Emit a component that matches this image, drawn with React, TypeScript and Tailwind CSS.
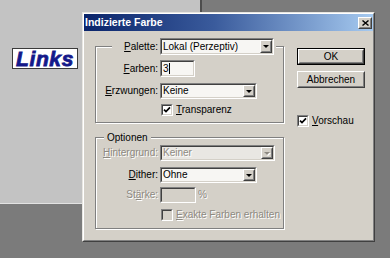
import React from "react";

type Kids = { children?: React.ReactNode; className?: string };

const dim = "text-[#8d8981] [text-shadow:1px_1px_0_#fff]";

// sunken 2px edge used by edits, combos and check boxes
const Sunken = ({ children, className = "", fill = "bg-[#f7f6f3]" }: Kids & { fill?: string }) => (
  <div className={`border border-t-[#808080] border-l-[#808080] border-r-white border-b-white ${className}`}>
    <div className={`flex h-full w-full items-center border border-t-[#404040] border-l-[#404040] border-r-[#d4d0c8] border-b-[#d4d0c8] ${fill}`}>
      {children}
    </div>
  </div>
);

const Raised = ({ children, className = "" }: Kids) => (
  <div className={`border border-t-white border-l-white border-r-[#404040] border-b-[#404040] bg-[#d4d0c8] ${className}`}>
    <div className="flex h-full w-full items-center justify-center border border-t-[#d4d0c8] border-l-[#d4d0c8] border-r-[#808080] border-b-[#808080]">
      {children}
    </div>
  </div>
);

const Arrow = ({ off }: { off?: boolean }) => (
  <Raised className="h-full w-[12px] shrink-0">
    <span
      className={`h-0 w-0 border-x-[3px] border-t-[3px] border-x-transparent ${
        off ? "border-t-[#8d8981] [filter:drop-shadow(1px_1px_0_#fff)]" : "border-t-black"
      }`}
    />
  </Raised>
);

const Combo = ({ value, className, off }: { value: string; className: string; off?: boolean }) => (
  <Sunken className={className} fill={off ? "bg-[#e9e7e3]" : "bg-[#f7f6f3]"}>
    <span className={`flex-1 truncate pl-[1px] leading-none ${off ? dim : "text-black"}`}>{value}</span>
    <Arrow off={off} />
  </Sunken>
);

const Check = ({ on, off }: { on?: boolean; off?: boolean }) => (
  <Sunken className="h-[12px] w-[12px] shrink-0" fill={off ? "bg-[#d4d0c8]" : "bg-white"}>
    {on && (
      <svg width="8" height="8" viewBox="0 0 8 8" className="block">
        <polyline points="1,3.6 3,5.6 7,1.4" fill="none" stroke="#000" strokeWidth="1.7" />
      </svg>
    )}
  </Sunken>
);

const Row = ({ label, children, className = "", off }: Kids & { label: React.ReactNode; off?: boolean }) => (
  <div className={`flex items-center ${className}`}>
    <span className={`w-[62px] text-right leading-none ${off ? dim : ""}`}>{label}</span>
    <div className="ml-[2px] flex items-center">{children}</div>
  </div>
);

const groupBox =
  "border border-[#808080] shadow-[inset_1px_1px_0_#fff,1px_1px_0_#fff] flex flex-col";

export default function App() {
  return (
    <div className="relative h-[258px] w-[390px] overflow-hidden bg-[#7b7b7b] font-['Liberation_Sans',Arial,sans-serif] text-[10px] text-black">
      {/* document canvas behind the dialog */}
      <div className="h-[204px] w-[202px] border-r-2 border-b border-r-[#4d4d4d] border-b-[#e2e2e2] bg-[#c3c3c3] pt-[48px] pl-[12px]">
        <div className="flex h-[21px] w-[66px] items-center justify-center border border-[#3a3a3a] bg-white">
          <span className="text-[21px] leading-none font-bold italic tracking-[0.6px] text-[#14198a] [-webkit-text-stroke:0.8px_#14198a]">
            Links
          </span>
        </div>
      </div>

      {/* dialog window */}
      <div className="absolute top-[12px] left-[82px] h-[230px] w-[293px] border border-t-[#e8e6e1] border-l-[#e8e6e1] border-r-[#404040] border-b-[#404040] bg-[#d4d0c8]">
        <div className="h-full w-full border border-t-white border-l-white border-r-[#808080] border-b-[#808080]">
          <div className="flex h-[17px] items-center justify-between bg-[linear-gradient(90deg,#0a246a_0%,#3a5b9c_45%,#a6caf0_100%)] pr-[1px] pl-[1px]">
            <span className="text-[10.5px] leading-none font-bold text-white">Indizierte Farbe</span>
            <Raised className="h-[12px] w-[14px]">
              <svg width="7" height="6" viewBox="0 0 7 6" className="block">
                <path d="M0.5 0.5 L6.5 5.5 M6.5 0.5 L0.5 5.5" stroke="#000" strokeWidth="1.4" />
              </svg>
            </Raised>
          </div>

          <div className="flex pl-[11px]">
            <div className="w-[189px] pt-[15px]">
              {/* palette group */}
              <div className={`${groupBox} pb-[6px]`}>
                <div className="-mt-[9px] ml-[16px] flex w-fit items-center bg-[#d4d0c8] pr-[2px]">
                  <span className="w-[46px] text-right leading-none">
                    <u>P</u>alette:
                  </span>
                  <Combo value="Lokal (Perzeptiv)" className="ml-[2px] h-[17px] w-[114px]" />
                </div>
                <Row label={<><u>F</u>arben:</>} className="mt-[5px]">
                  <Sunken className="h-[17px] w-[35px]">
                    <span className="pl-[1px] leading-none">3</span>
                    <span className="h-[11px] w-[1px] bg-black" />
                  </Sunken>
                </Row>
                <Row label={<><u>E</u>rzwungen:</>} className="mt-[6px]">
                  <Combo value="Keine" className="h-[16px] w-[97px]" />
                </Row>
                <div className="mt-[5px] flex items-center pl-[65px]">
                  <Check on />
                  <span className="ml-[3px] leading-none">
                    <u>T</u>ransparenz
                  </span>
                </div>
              </div>

              {/* options group */}
              <div className={`${groupBox} mt-[14px] pb-[7px]`}>
                <span className="-mt-[7px] ml-[8px] flex h-[13px] w-fit items-center bg-[#d4d0c8] px-[3px] leading-none">
                  Optionen
                </span>
                <Row label={<><u>H</u>intergrund:</>} off className="mt-[1px]">
                  <Combo value="Keiner" off className="h-[16px] w-[115px]" />
                </Row>
                <Row label={<><u>D</u>ither:</>} className="mt-[6px]">
                  <Combo value="Ohne" className="h-[16px] w-[97px]" />
                </Row>
                <Row label={<>St<u>ä</u>rke:</>} off className="mt-[4px]">
                  <Sunken className="h-[16px] w-[36px]" fill="bg-[#d4d0c8]" />
                  <span className={`ml-[2px] leading-none ${dim}`}>%</span>
                </Row>
                <div className="mt-[6px] flex items-center pl-[65px]">
                  <Check off />
                  <span className={`ml-[3px] leading-none ${dim}`}>
                    <u>E</u>xakte Farben erhalten
                  </span>
                </div>
              </div>
            </div>

            {/* buttons */}
            <div className="ml-[13px] flex flex-col pt-[17px]">
              <div className="h-[17px] w-[68px] border border-black">
                <Raised className="h-full w-full">
                  <span className="leading-none">OK</span>
                </Raised>
              </div>
              <Raised className="mt-[6px] h-[17px] w-[68px]">
                <span className="leading-none">Abbrechen</span>
              </Raised>
              <div className="mt-[27px] flex items-center">
                <Check on />
                <span className="ml-[3px] leading-none">
                  <u>V</u>orschau
                </span>
              </div>
            </div>
          </div>
        </div>
      </div>
    </div>
  );
}
